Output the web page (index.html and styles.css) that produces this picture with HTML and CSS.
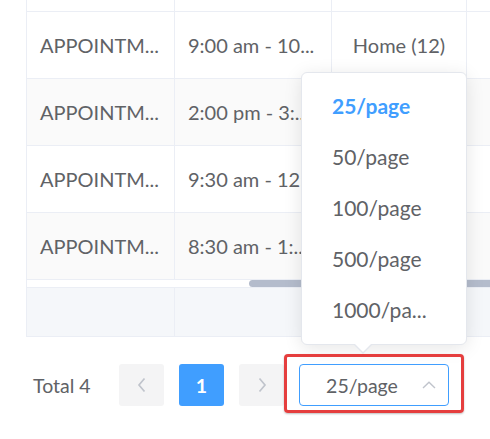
FILE: index.html
```html
<!DOCTYPE html>
<html>
<head>
<meta charset="utf-8">
<link rel="stylesheet" href="styles.css">
</head>
<body>
<div class="page">
  <div class="table">
    <div class="row top">
      <div class="cell"></div><div class="cell"></div><div class="cell"></div><div class="cell"></div>
    </div>
    <div class="row">
      <div class="cell">APPOINTM...</div><div class="cell">9:00 am - 10...</div><div class="cell center">Home (12)</div><div class="cell"></div>
    </div>
    <div class="row striped">
      <div class="cell">APPOINTM...</div><div class="cell">2:00 pm - 3:...</div><div class="cell center"></div><div class="cell"></div>
    </div>
    <div class="row">
      <div class="cell">APPOINTM...</div><div class="cell">9:30 am - 12:...</div><div class="cell center"></div><div class="cell"></div>
    </div>
    <div class="row striped">
      <div class="cell">APPOINTM...</div><div class="cell">8:30 am - 1:...</div><div class="cell center"></div><div class="cell"></div>
    </div>
    <div class="scrollbar"><div class="thumb"></div></div>
    <div class="row footer">
      <div class="cell"></div><div class="cell"></div><div class="cell"></div><div class="cell"></div>
    </div>
  </div>

  <div class="pagination">
    <span class="total">Total 4</span>
    <button class="btn">
      <svg width="12" height="16" viewBox="0 0 12 16"><path d="M8.5 1.5 L3 8 L8.5 14.5" fill="none" stroke="#c0c4cc" stroke-width="1.7"/></svg>
    </button>
    <button class="btn active">1</button>
    <button class="btn">
      <svg width="12" height="16" viewBox="0 0 12 16"><path d="M3.5 1.5 L9 8 L3.5 14.5" fill="none" stroke="#c0c4cc" stroke-width="1.7"/></svg>
    </button>
    <div class="select">
      <span class="select-text">25/page</span>
      <svg class="select-arrow" width="14" height="8" viewBox="0 0 14 8"><path d="M1 7 L7 1.2 L13 7" fill="none" stroke="#c0c4cc" stroke-width="1.4"/></svg>
    </div>
  </div>

  <div class="dropdown">
    <div class="item selected">25/page</div>
    <div class="item">50/page</div>
    <div class="item">100/page</div>
    <div class="item">500/page</div>
    <div class="item">1000/pa...</div>
  </div>

  <div class="highlight"></div>
</div>
</body>
</html>
```
FILE: styles.css
```css
* { box-sizing: border-box; }
body {
  margin: 0;
  background: #fff;
  font-family: "Lato", "Liberation Sans", sans-serif;
  color: #606266;
}
.page {
  position: relative;
  width: 490px;
  height: 439px;
  overflow: hidden;
}
.table {
  margin-left: 26px;
  width: 600px;
  border-left: 1px solid #ebeef5;
}
.row {
  display: grid;
  grid-template-columns: 148px 157px 135px 160px;
  height: 67px;
  border-bottom: 1px solid #ebeef5;
  background: #fff;
}
.row.top { height: 12px; }
.row.striped { background: #fafafa; }
.row.footer {
  height: 50px;
  background: #f5f7fa;
  border-top: 1px solid #ebeef5;
}
.cell {
  border-right: 1px solid #ebeef5;
  display: flex;
  align-items: center;
  padding: 0 13px;
  font-size: 20px;
  white-space: nowrap;
  overflow: hidden;
}
.cell.center { justify-content: center; }
.scrollbar {
  height: 7px;
  display: flex;
  align-items: stretch;
}
.thumb {
  margin-left: 222px;
  width: 400px;
  background: #b4bccc;
  border-radius: 4px;
}

.pagination {
  display: flex;
  align-items: center;
  margin-top: 27px;
  padding-left: 33px;
  height: 42px;
}
.total {
  font-size: 19.5px;
  width: 86px;
}
.btn {
  width: 45px;
  height: 42px;
  border: none;
  border-radius: 3px;
  background: #f4f4f5;
  margin-right: 15px;
  padding: 0;
  display: flex;
  align-items: center;
  justify-content: center;
  font-family: inherit;
  font-size: 19.5px;
  font-weight: 700;
  color: #606266;
}
.btn.active {
  background: #409eff;
  color: #fff;
}
.select {
  position: relative;
  width: 150px;
  height: 42px;
  border: 1px solid #409eff;
  border-radius: 4px;
  display: flex;
  align-items: center;
  justify-content: center;
  padding-right: 24px;
}
.select-text {
  font-size: 19.5px;
  color: #606266;
}
.select-arrow {
  position: absolute;
  right: 12px;
  top: 16px;
}

.dropdown {
  position: absolute;
  left: 301px;
  top: 72px;
  width: 166px;
  height: 273px;
  background: #fff;
  border: 1px solid #e4e7ed;
  border-radius: 6px;
  box-shadow: 0 3px 18px rgba(0, 0, 0, 0.1);
  padding: 7px 0;
}
.dropdown::before,
.dropdown::after {
  content: "";
  position: absolute;
  left: 52px;
  width: 0;
  height: 0;
  border-left: 9px solid transparent;
  border-right: 9px solid transparent;
}
.dropdown::before {
  bottom: -10px;
  border-top: 9px solid #e4e7ed;
}
.dropdown::after {
  bottom: -8px;
  border-top: 9px solid #fff;
}
.item {
  height: 51px;
  display: flex;
  align-items: center;
  padding-left: 30px;
  font-size: 21px;
  color: #606266;
  white-space: nowrap;
}
.item.selected {
  color: #409eff;
  font-weight: 700;
}

.highlight {
  position: absolute;
  left: 284px;
  top: 354px;
  width: 180px;
  height: 59px;
  border: 3.5px solid #e53e3e;
  border-radius: 4px;
  box-shadow: 0 1px 2px rgba(0, 0, 0, 0.25);
}
```
